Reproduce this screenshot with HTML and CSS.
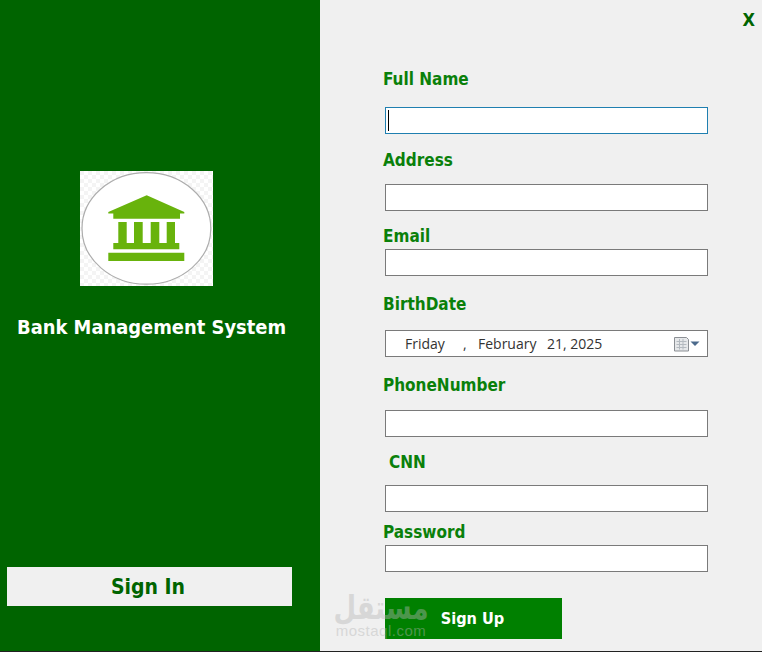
FILE: index.html
```html
<!DOCTYPE html>
<html lang="en">
<head>
<meta charset="utf-8">
<title>Bank Management System</title>
<link rel="stylesheet" href="styles.css">
</head>
<body>
<div class="window">
  <aside class="side">
    <div class="brand">
      <svg class="logo" viewBox="0 0 133 115" width="133" height="115" aria-hidden="true">
        <defs>
          <pattern id="chk" width="8" height="8" patternUnits="userSpaceOnUse">
            <rect width="8" height="8" fill="#ffffff"/>
            <rect width="4" height="4" fill="#f4f4f4"/>
            <rect x="4" y="4" width="4" height="4" fill="#f4f4f4"/>
          </pattern>
        </defs>
        <rect width="133" height="115" fill="url(#chk)"/>
        <ellipse cx="66.4" cy="57.4" rx="64.4" ry="55.8" fill="#fff" stroke="#adadad" stroke-width="1.2"/>
        <path fill="#68b30c" d="M66.7 24.3 104.3 41v1.5h-4.3V47.7H33.3V42.5h-5V41Z"/>
        <path fill="#68b30c" d="M38.3 51h8.4v22h-8.4ZM54 51h8.7v22H54ZM70.7 51h8.6v22h-8.6ZM86.7 51H95v22h-8.3ZM33.3 72h66v6.3h-66ZM28.3 81.7h76V90h-76Z"/>
      </svg>
      <h1 class="title">Bank Management System</h1>
    </div>
    <button class="signin" type="button">Sign In</button>
  </aside>
  <main class="panel">
    <div class="close">X</div>
    <form class="form">
      <div class="field f-name">
        <label class="label">Full Name</label>
        <div class="box box-focus"><span class="caret"></span></div>
      </div>
      <div class="field f-address">
        <label class="label">Address</label>
        <div class="box"></div>
      </div>
      <div class="field f-email">
        <label class="label">Email</label>
        <div class="box"></div>
      </div>
      <div class="field f-birth">
        <label class="label">BirthDate</label>
        <div class="box date">
          <span class="d-day">Friday</span>
          <span class="d-comma">,</span>
          <span class="d-month">February</span>
          <span class="d-num">21, 2025</span>
          <svg class="cal" viewBox="0 0 26 16" width="26" height="16" aria-hidden="true">
            <path d="M.5 1.5h12l2 2v11.5H.5Z" fill="#e6e8ea" stroke="#8b8f94"/>
            <path d="M2.5 5.5h10M2.5 8.5h10M2.5 11.5h10M5.5 3v10.5M9 3v10.5" stroke="#b4bac0" fill="none"/>
            <path d="M16.5 5.5h9l-4.5 4.5Z" fill="#4c6a8c"/>
          </svg>
        </div>
      </div>
      <div class="field f-phone">
        <label class="label">PhoneNumber</label>
        <div class="box"></div>
      </div>
      <div class="field f-cnn">
        <label class="label label-in">CNN</label>
        <div class="box"></div>
      </div>
      <div class="field f-pass">
        <label class="label">Password</label>
        <div class="box"></div>
      </div>
      <button class="signup" type="button">Sign Up</button>
    </form>
    <div class="mark">
      <span class="mark-ar" dir="rtl" lang="ar">مستقل</span>
      <span class="mark-en">mostaql.com</span>
    </div>
  </main>
</div>
</body>
</html>
```
FILE: styles.css
```css
* { box-sizing: border-box; }
html, body { margin: 0; padding: 0; }
body {
  width: 762px;
  height: 652px;
  overflow: hidden;
  background: #f0f0f0;
  font-family: "DejaVu Sans Condensed", "DejaVu Sans", sans-serif;
}
.window {
  display: flex;
  height: 652px;
  border-bottom: 1px solid #222;
}
.side {
  width: 320px;
  flex: none;
  background: #006400;
  padding: 171px 28px 0 7px;
  display: flex;
  flex-direction: column;
}
.brand { display: flex; flex-direction: column; }
.logo { display: block; margin-left: 73px; }
.title {
  margin: 30px 0 0 10px;
  font-size: 19.9px;
  line-height: 24px;
  font-weight: 700;
  color: #fff;
  white-space: nowrap;
}
.signin {
  margin-top: 227px;
  height: 39px;
  width: 285px;
  border: 0;
  padding: 2px 3px 0 0;
  background: #f0f0f0;
  color: #006400;
  font: 700 21px/37px "DejaVu Sans Condensed", "DejaVu Sans", sans-serif;
}
.panel { flex: 1; position: relative; padding: 0 0 0 63px; }
.close {
  display: flex;
  justify-content: flex-end;
  padding: 9px 7px 0 0;
  height: 30px;
  margin-bottom: 39px;
  color: #006400;
  font-size: 18px;
  line-height: 22px;
  font-weight: 700;
}
.form { display: flex; flex-direction: column; position: relative; }
.field { display: flex; flex-direction: column; }
.label {
  display: block;
  height: 20px;
  line-height: 20px;
  font-size: 17px;
  font-weight: 700;
  color: #0a800a;
}
.label-in { padding-left: 6px; }
.box {
  margin-left: 2px;
  width: 323px;
  height: 27px;
  background: #fff;
  border: 1px solid #7a7a7a;
  position: relative;
}
.box-focus { border-color: #1f7fb0; }
.caret {
  position: absolute;
  left: 2px;
  top: 2px;
  width: 1px;
  height: 21px;
  background: #000;
}
.f-name .label { margin-bottom: 18px; }
.f-address { padding-top: 16px; }
.f-address .label { margin-bottom: 14px; }
.f-email { padding-top: 15px; }
.f-email .label { margin-bottom: 3px; }
.f-birth { padding-top: 18px; }
.f-birth .label { margin-bottom: 16px; }
.f-phone { padding-top: 18px; }
.f-phone .label { margin-bottom: 15px; }
.f-cnn { padding-top: 15px; }
.f-cnn .label { margin-bottom: 13px; }
.f-pass { padding-top: 10px; }
.f-pass .label { margin-bottom: 3px; }
.date {
  display: flex;
  align-items: center;
  font-family: "Open Sans", "Noto Sans", sans-serif;
  font-size: 14px;
  color: #333;
  padding-left: 19px;
}
.d-day { width: 58px; }
.d-comma { width: 15px; }
.d-month { width: 69px; }
.d-num { flex: 1; }
.cal { margin-right: 7px; display: block; }
.signup {
  margin: 26px 0 0 2px;
  width: 177px;
  height: 41px;
  border: 0;
  padding: 1px 2px 0 0;
  background: #008000;
  color: #fff;
  font: 700 16.2px/40px "DejaVu Sans Condensed", "DejaVu Sans", sans-serif;
  text-align: center;
}
.mark {
  position: absolute;
  left: 15px;
  top: 594px;
  width: 92px;
  display: flex;
  flex-direction: column;
  align-items: center;
  opacity: .42;
  color: #b5b5b5;
  pointer-events: none;
}
.mark-ar {
  font: 700 26px/29px "DejaVu Sans", sans-serif;
  transform: scaleY(1.25);
}
.mark-en {
  font: 400 15px/15px "Liberation Sans", sans-serif;
  letter-spacing: .5px;
}
```
